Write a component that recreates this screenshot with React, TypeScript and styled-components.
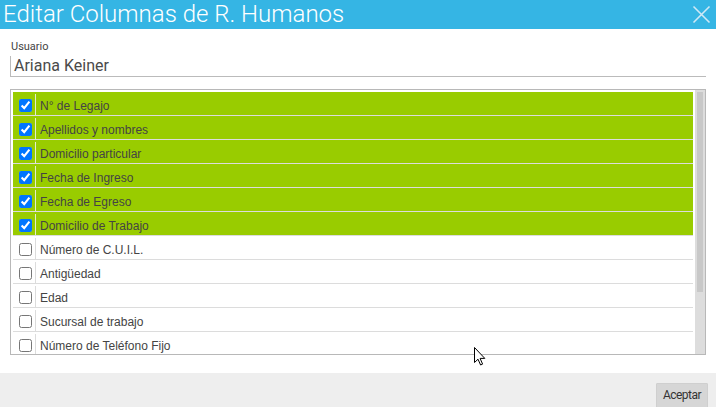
import React from "react";
import styled, { createGlobalStyle } from "styled-components";

const Global = createGlobalStyle`
  html, body { margin: 0; padding: 0; overflow: hidden; background: #fff; }
  * { box-sizing: border-box; }
`;

const Dialog = styled.div`
  position: relative;
  width: 716px;
  height: 407px;
  display: flex;
  flex-direction: column;
  background: #fff;
  overflow: hidden;
  font-family: Roboto, "Liberation Sans", sans-serif;
`;

const Header = styled.div`
  height: 29px;
  flex: none;
  background: #35b5e4;
  display: flex;
  align-items: center;
  justify-content: space-between;
  padding-left: 3px;
  padding-right: 5px;
`;

const Title = styled.h1`
  margin: 0;
  font-family: Roboto, sans-serif;
  font-weight: 300;
  font-size: 24px;
  line-height: 29px;
  color: #fff;
`;

const CloseButton = styled.button`
  border: 0;
  background: transparent;
  padding: 0;
  width: 19px;
  height: 19px;
  display: flex;
  cursor: pointer;
`;

const Body = styled.div`
  flex: 1;
  padding: 11px 10px 0 10px;
  display: flex;
  flex-direction: column;
`;

const FieldLabel = styled.label`
  font-size: 11px;
  line-height: 13px;
  color: #444;
  padding-left: 1px;
`;

const FieldValue = styled.div`
  margin-top: 3px;
  height: 21px;
  border-left: 1px solid #bbb;
  border-bottom: 1px solid #bbb;
  padding-left: 3px;
  font-size: 16px;
  line-height: 20px;
  color: #4a4a4a;
`;

const ListBox = styled.div`
  margin-top: 12px;
  height: 266px;
  border: 1px solid #b8b8b8;
  display: flex;
  overflow: hidden;
`;

const Rows = styled.div`
  flex: 1;
  padding: 2px 2px 0 2px;
  overflow: hidden;
`;

const Row = styled.div<{ $on: boolean }>`
  display: flex;
  height: 24px;
  padding-top: 2px;
  border-bottom: 1px solid #dcdcdc;
  background: ${(p) => (p.$on ? "#99cc00" : "#fff")};
`;

const CheckCell = styled.div<{ $on: boolean }>`
  width: 23px;
  height: 21px;
  flex: none;
  padding: 5px 0 0 6px;
  border-right: 1px solid ${(p) => (p.$on ? "#e4edcf" : "#dcdcdc")};
`;

const Check = styled.input`
  width: 13px;
  height: 13px;
  margin: 0;
  display: block;
`;

const RowLabel = styled.span`
  padding: 5px 0 0 4px;
  font-family: "Liberation Sans", Arial, sans-serif;
  font-size: 12px;
  line-height: 14px;
  color: #444;
`;

const Track = styled.div`
  width: 10px;
  flex: none;
  background: #dddddd;
  padding: 2px 2px 0 2px;
`;

const Thumb = styled.div`
  height: 200px;
  background: #c8c8c8;
`;

const Footer = styled.div`
  height: 34px;
  flex: none;
  background: #eeeeee;
  display: flex;
  justify-content: flex-end;
  align-items: flex-start;
  padding: 10px 8px 0 0;
`;

const Button = styled.button`
  width: 52px;
  height: 26px;
  border: 1px solid #cfcfcf;
  background: #d6d6d6;
  color: #333;
  font-family: Roboto, sans-serif;
  font-size: 12px;
  letter-spacing: -0.5px;
  padding: 0;
  padding-bottom: 2px;
  border-radius: 1px;
`;

const Cursor = styled.svg`
  position: absolute;
  left: 474px;
  top: 347px;
  pointer-events: none;
`;

const items: { label: string; on: boolean }[] = [
  { label: "N° de Legajo", on: true },
  { label: "Apellidos y nombres", on: true },
  { label: "Domicilio particular", on: true },
  { label: "Fecha de Ingreso", on: true },
  { label: "Fecha de Egreso", on: true },
  { label: "Domicilio de Trabajo", on: true },
  { label: "Número de C.U.I.L.", on: false },
  { label: "Antigüedad", on: false },
  { label: "Edad", on: false },
  { label: "Sucursal de trabajo", on: false },
  { label: "Número de Teléfono Fijo", on: false },
];

export default function App() {
  return (
    <Dialog>
      <Global />
      <Header>
        <Title>Editar Columnas de R. Humanos</Title>
        <CloseButton aria-label="Cerrar">
          <svg width="19" height="19" viewBox="0 0 19 19">
            <path d="M1.5 1.5 L17.5 17.5 M17.5 1.5 L1.5 17.5" stroke="#cfe9f6" strokeWidth="1.6" fill="none" />
          </svg>
        </CloseButton>
      </Header>
      <Body>
        <FieldLabel>Usuario</FieldLabel>
        <FieldValue>Ariana Keiner</FieldValue>
        <ListBox>
          <Rows>
            {items.map((it) => (
              <Row key={it.label} $on={it.on}>
                <CheckCell $on={it.on}>
                  <Check type="checkbox" defaultChecked={it.on} />
                </CheckCell>
                <RowLabel>{it.label}</RowLabel>
              </Row>
            ))}
          </Rows>
          <Track>
            <Thumb />
          </Track>
        </ListBox>
      </Body>
      <Footer>
        <Button>Aceptar</Button>
      </Footer>
      <Cursor width="12" height="19" viewBox="0 0 12 19">
        <path d="M0.5 0.5 L0.5 15.5 L4 12.2 L6.6 18 L8.6 17.1 L6.1 11.4 L10.8 11.4 Z" fill="#fff" stroke="#000" strokeWidth="1" strokeLinejoin="miter" />
      </Cursor>
    </Dialog>
  );
}
